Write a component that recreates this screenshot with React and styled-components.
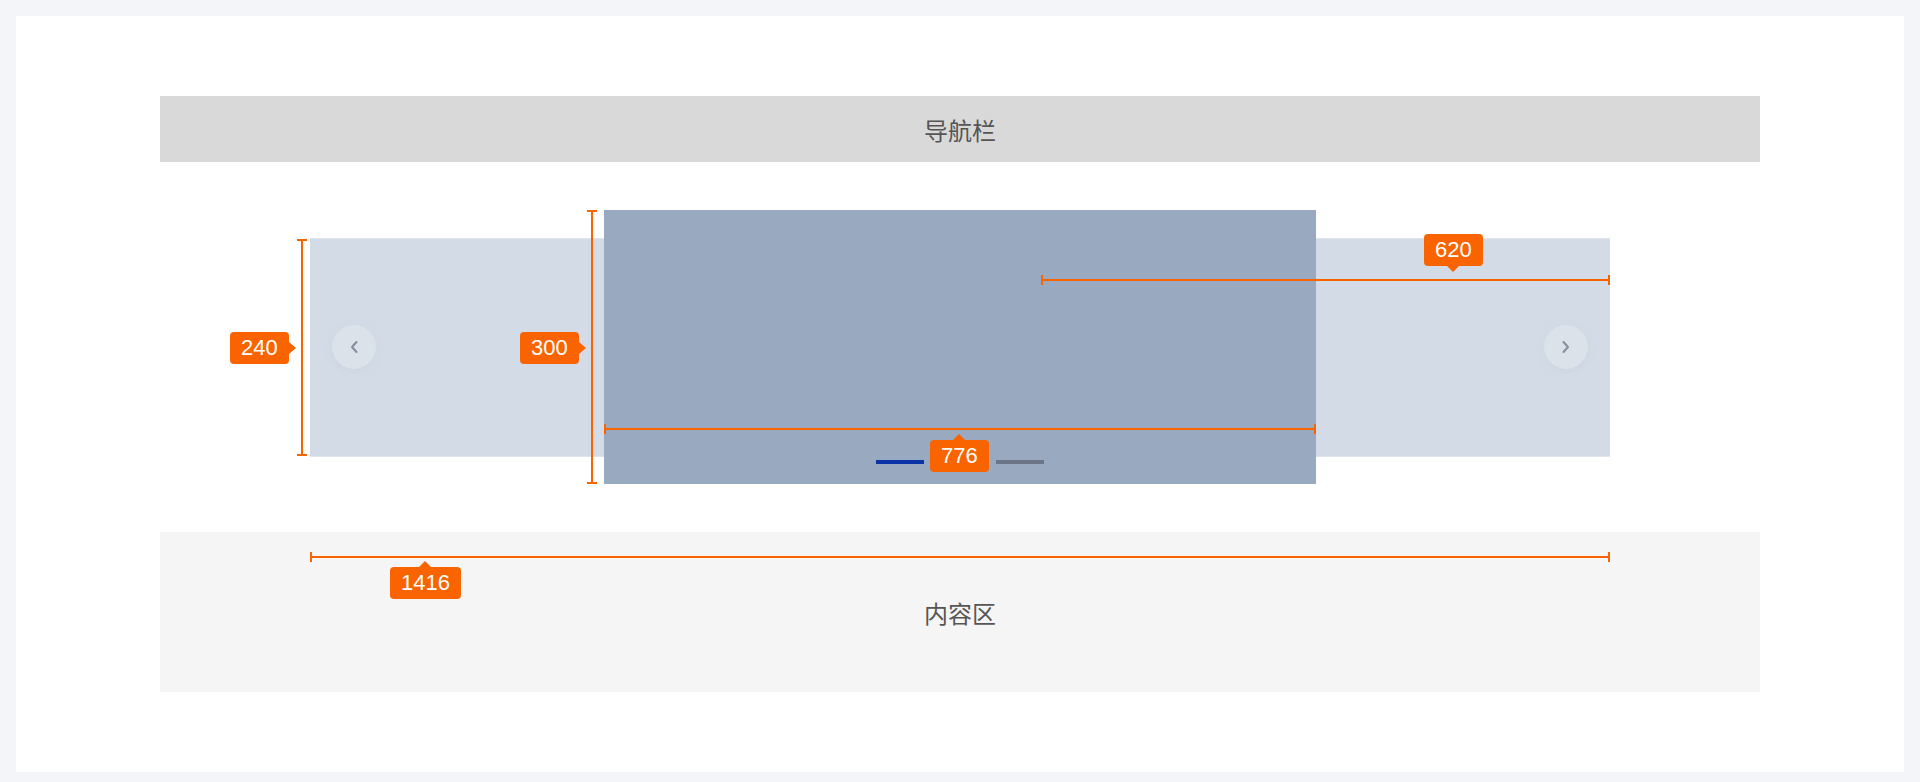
import React from "react";
import styled, { createGlobalStyle, css } from "styled-components";

const ORANGE = "#fa6400";

const Global = createGlobalStyle`
  html, body { margin: 0; padding: 0; }
  body {
    background: #f4f5f9;
    padding: 16px 16px 0;
    font-family: "Noto Sans CJK SC", "Noto Sans", sans-serif;
  }
  * { box-sizing: border-box; }
`;

const Card = styled.div`
  position: relative;
  background: #ffffff;
  height: 756px;
  padding: 80px 144px;
  display: flex;
  flex-direction: column;
  gap: 48px;
`;

const NavBar = styled.div`
  height: 66px;
  background: #d9d9d9;
  display: flex;
  align-items: center;
  justify-content: center;
  color: #555555;
  font-size: 24px;
`;

const Stage = styled.div`
  width: 1300px;
  height: 274px;
  margin: 0 auto;
  display: grid;
  grid-template-areas: "stack";
  align-items: center;
  justify-items: center;
`;

const Backdrop = styled.div`
  grid-area: stack;
  width: 100%;
  height: 219px;
  background: #d3dbe6;
  border-top: 1px solid #dfe5ed;
  border-bottom: 1px solid #dfe5ed;
  display: flex;
  align-items: center;
  justify-content: space-between;
  padding: 0 22px;
`;

const ArrowBtn = styled.div`
  width: 44px;
  height: 44px;
  border-radius: 50%;
  background: #dbe2ea;
  box-shadow: 0 2px 6px rgba(200, 210, 222, 0.5);
  display: flex;
  align-items: center;
  justify-content: center;
`;

const Slide = styled.div`
  grid-area: stack;
  width: 712px;
  height: 274px;
  background: #99a9bf;
  display: flex;
  align-items: flex-end;
  justify-content: center;
  padding-bottom: 20px;
  z-index: 1;
`;

const Dots = styled.div`
  display: flex;
  gap: 12px;
`;

const Dot = styled.span`
  width: 48px;
  height: 4px;
  background: ${(p) => (p.$active ? "#0a33a8" : "#6b7585")};
`;

const Content = styled.div`
  height: 160px;
  background: #f5f5f5;
  display: flex;
  align-items: center;
  justify-content: center;
  color: #555555;
  font-size: 24px;
`;

/* ---------- measurement annotations (overlay) ---------- */

const Overlay = styled.div`
  position: absolute;
  inset: 0;
  pointer-events: none;
  z-index: 5;
`;

const VLine = styled.div`
  position: absolute;
  width: 2px;
  background: ${ORANGE};
  &::before, &::after {
    content: "";
    position: absolute;
    left: -4px;
    width: 10px;
    height: 2px;
    background: ${ORANGE};
  }
  &::before { top: 0; }
  &::after { bottom: 0; }
`;

const HLine = styled.div`
  position: absolute;
  height: 2px;
  background: ${ORANGE};
  &::before, &::after {
    content: "";
    position: absolute;
    top: -4px;
    width: 2px;
    height: 10px;
    background: ${ORANGE};
  }
  &::before { left: 0; }
  &::after { right: 0; }
`;

const pointers = {
  right: css`
    top: 50%;
    right: -7px;
    margin-top: -6px;
    border-top: 6px solid transparent;
    border-bottom: 6px solid transparent;
    border-left: 7px solid ${ORANGE};
  `,
  top: css`
    left: 50%;
    top: -6px;
    margin-left: -6px;
    border-left: 6px solid transparent;
    border-right: 6px solid transparent;
    border-bottom: 6px solid ${ORANGE};
  `,
  bottom: css`
    left: 50%;
    bottom: -6px;
    margin-left: -6px;
    border-left: 6px solid transparent;
    border-right: 6px solid transparent;
    border-top: 6px solid ${ORANGE};
  `,
};

const Tag = styled.div`
  position: absolute;
  height: 32px;
  padding: 0 11px;
  background: ${ORANGE};
  border-radius: 4px;
  color: #ffffff;
  font-family: "Liberation Sans", Arial, sans-serif;
  font-size: 22px;
  line-height: 32px;
  white-space: nowrap;
  &::after {
    content: "";
    position: absolute;
    width: 0;
    height: 0;
    ${(p) => pointers[p.$pointer]}
  }
`;

const Chevron = ({ dir }) => (
  <svg width="10" height="14" viewBox="0 0 10 14" fill="none">
    <polyline
      points={dir === "left" ? "7.5,2 3,7 7.5,12" : "2.5,2 7,7 2.5,12"}
      stroke="#858e9b"
      strokeWidth="2"
      strokeLinecap="round"
      strokeLinejoin="round"
    />
  </svg>
);

export default function App() {
  return (
    <>
      <Global />
      <Card>
        <NavBar>导航栏</NavBar>
        <Stage>
          <Backdrop>
            <ArrowBtn>
              <Chevron dir="left" />
            </ArrowBtn>
            <ArrowBtn>
              <Chevron dir="right" />
            </ArrowBtn>
          </Backdrop>
          <Slide>
            <Dots>
              <Dot $active />
              <Dot />
              <Dot />
            </Dots>
          </Slide>
        </Stage>
        <Content>内容区</Content>

        <Overlay>
          <VLine style={{ left: 285, top: 223, height: 217 }} />
          <Tag $pointer="right" style={{ left: 214, top: 316 }}>240</Tag>

          <VLine style={{ left: 575, top: 194, height: 274 }} />
          <Tag $pointer="right" style={{ left: 504, top: 316 }}>300</Tag>

          <HLine style={{ left: 588, top: 412, width: 712 }} />
          <Tag $pointer="top" style={{ left: 914, top: 424 }}>776</Tag>

          <HLine style={{ left: 1025, top: 263, width: 569 }} />
          <Tag $pointer="bottom" style={{ left: 1408, top: 218 }}>620</Tag>

          <HLine style={{ left: 294, top: 540, width: 1300 }} />
          <Tag $pointer="top" style={{ left: 374, top: 551 }}>1416</Tag>
        </Overlay>
      </Card>
    </>
  );
}
